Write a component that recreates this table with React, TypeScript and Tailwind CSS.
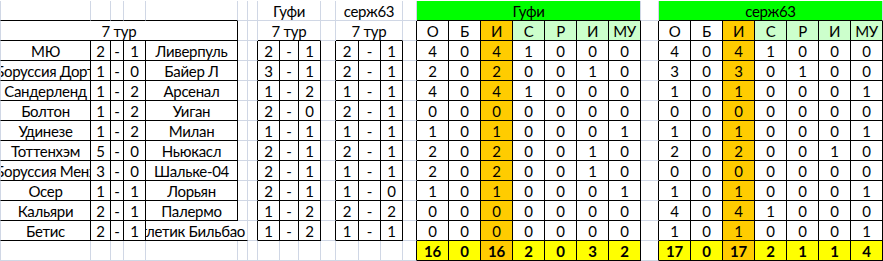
import React from "react";

type Cell = {
  span: number;
  text?: string;
  bg?: string;
  bold?: boolean;
  kind?: "clip" | "overflow";
};

const GREEN = "bg-[#00ff00]";
const LGREEN = "bg-[#ccffcc]";
const ORANGE = "bg-[#ffcc00]";
const YELLOW = "bg-[#ffff00]";

const matches: [string, string, string, string, string, string, string, string, string, number[], number[]][] = [
  ["МЮ", "2", "1", "Ливерпуль", "2", "1", "2", "1", "", [4, 0, 4, 1, 0, 0, 0], [4, 0, 4, 1, 0, 0, 0]],
  ["Боруссия Дортмунд", "1", "0", "Байер Л", "3", "1", "2", "1", "clip", [2, 0, 2, 0, 0, 1, 0], [3, 0, 3, 0, 1, 0, 0]],
  ["Сандерленд", "1", "2", "Арсенал", "1", "2", "1", "1", "", [4, 0, 4, 1, 0, 0, 0], [1, 0, 1, 0, 0, 0, 1]],
  ["Болтон", "1", "2", "Уиган", "2", "0", "2", "1", "", [0, 0, 0, 0, 0, 0, 0], [0, 0, 0, 0, 0, 0, 0]],
  ["Удинезе", "1", "2", "Милан", "1", "1", "1", "1", "", [1, 0, 1, 0, 0, 0, 1], [1, 0, 1, 0, 0, 0, 1]],
  ["Тоттенхэм", "5", "0", "Ньюкасл", "2", "1", "2", "1", "", [2, 0, 2, 0, 0, 1, 0], [2, 0, 2, 0, 0, 1, 0]],
  ["Боруссия Менхенгладбах", "3", "0", "Шальке-04", "2", "1", "1", "1", "clip", [2, 0, 2, 0, 0, 1, 0], [0, 0, 0, 0, 0, 0, 0]],
  ["Осер", "1", "1", "Лорьян", "2", "1", "1", "0", "", [1, 0, 1, 0, 0, 0, 1], [1, 0, 1, 0, 0, 0, 1]],
  ["Кальяри", "2", "1", "Палермо", "1", "2", "2", "2", "", [0, 0, 0, 0, 0, 0, 0], [4, 0, 4, 1, 0, 0, 0]],
  ["Бетис", "2", "1", "Атлетик Бильбао", "1", "2", "1", "1", "", [0, 0, 0, 0, 0, 0, 0], [1, 0, 1, 0, 0, 0, 1]],
];

const headers = ["О", "Б", "И", "С", "Р", "И", "МУ"];
const headerBg = ["", "", ORANGE, LGREEN, LGREEN, LGREEN, LGREEN];

function empties(n: number): Cell[] {
  return Array.from({ length: n }, () => ({ span: 1 }));
}

function buildRows(): Cell[][] {
  const rows: Cell[][] = [];
  rows.push([
    ...empties(7),
    { span: 3, text: "Гуфи" },
    { span: 1 },
    { span: 3, text: "серж63" },
    { span: 1 },
    { span: 7, text: "Гуфи", bg: GREEN },
    { span: 1 },
    { span: 7, text: "серж63", bg: GREEN },
  ]);
  const hdr: Cell[] = headers.map((h, i) => ({ span: 1, text: h, bg: headerBg[i] }));
  rows.push([
    { span: 5, text: "7 тур" },
    ...empties(2),
    { span: 3, text: "7 тур" },
    { span: 1 },
    { span: 3, text: "7 тур" },
    { span: 1 },
    ...hdr,
    { span: 1 },
    ...hdr,
  ]);
  matches.forEach((m, idx) => {
    const [home, hs, as, away, g1, g2, s1, s2, kind, gs, ss] = m;
    const last = idx === matches.length - 1;
    const stat = (arr: number[]): Cell[] =>
      arr.map((v, i) => ({ span: 1, text: String(v), bg: i === 2 ? ORANGE : "" }));
    rows.push([
      { span: 1, text: home, kind: kind === "clip" ? "clip" : undefined },
      { span: 1, text: hs },
      { span: 1, text: "-" },
      { span: 1, text: as },
      last ? { span: 2, text: away, kind: "overflow" } : { span: 1, text: away },
      ...(last ? [] : empties(1)),
      { span: 1 },
      { span: 1, text: g1 },
      { span: 1, text: "-" },
      { span: 1, text: g2 },
      { span: 1 },
      { span: 1, text: s1 },
      { span: 1, text: "-" },
      { span: 1, text: s2 },
      { span: 1 },
      ...stat(gs),
      { span: 1 },
      ...stat(ss),
    ]);
  });
  const tot = (arr: number[]): Cell[] =>
    arr.map((v, i) => ({ span: 1, text: String(v), bg: i === 2 ? ORANGE : YELLOW, bold: true }));
  rows.push([...empties(15), ...tot([16, 0, 16, 2, 0, 3, 2]), { span: 1 }, ...tot([17, 0, 17, 2, 1, 1, 4])]);
  return rows;
}

function inRegion(r: number, c: number): boolean {
  if (r >= 1 && r <= 11 && c >= 0 && c <= 4) return true;
  if (r >= 2 && r <= 11 && ((c >= 7 && c <= 9) || (c >= 11 && c <= 13))) return true;
  if (r >= 1 && r <= 12 && ((c >= 15 && c <= 21) || (c >= 23 && c <= 29))) return true;
  return false;
}

const spanClass: Record<number, string> = {
  1: "",
  2: "col-span-2",
  3: "col-span-3",
  5: "col-span-5",
  7: "col-span-7",
};

export default function App() {
  const rows = buildRows();
  return (
    <div
      className="w-[883px] h-[261px] bg-white pt-[1px] overflow-hidden text-black"
      style={{ fontFamily: "Lato, 'Noto Sans', sans-serif" }}
    >
      <div className="grid grid-cols-[91px_20px_13px_22px_92px_10px_10px_22px_19px_22px_15px_23px_22px_22px_14px_32px_32px_32px_32px_32px_32px_32px_18px_32px_32px_32px_32px_32px_32px_32px] auto-rows-[20px] text-[15px] tracking-[-0.3px]">
        {rows.map((row, r) => {
          let c = 0;
          return row.map((cell, i) => {
            const start = c;
            const lastCol = c + cell.span - 1;
            c += cell.span;
            const rightBlack = inRegion(r, lastCol) || inRegion(r, lastCol + 1);
            const bottomBlack = inRegion(r, start) || inRegion(r + 1, start);
            const cls = [
              "h-[20px] border-r border-b flex overflow-hidden whitespace-nowrap leading-[18px] pt-[1px]",
              rightBlack ? "border-r-black" : "border-r-[#d0d7e5]",
              bottomBlack ? "border-b-black" : "border-b-[#d0d7e5]",
              start === 0 ? "border-l border-l-[#d0d7e5]" : "",
              spanClass[cell.span],
              cell.bg || "",
              cell.bold ? "font-bold" : "",
              cell.kind === "clip" ? "justify-start" : cell.kind === "overflow" ? "justify-end pr-[2px]" : "justify-center",
            ].join(" ");
            return (
              <div key={`${r}-${i}`} className={cls}>
                {cell.text !== undefined && (
                  <span className={cell.kind === "clip" ? "-ml-[6px] shrink-0" : "shrink-0"}>{cell.text}</span>
                )}
              </div>
            );
          });
        })}
      </div>
    </div>
  );
}
